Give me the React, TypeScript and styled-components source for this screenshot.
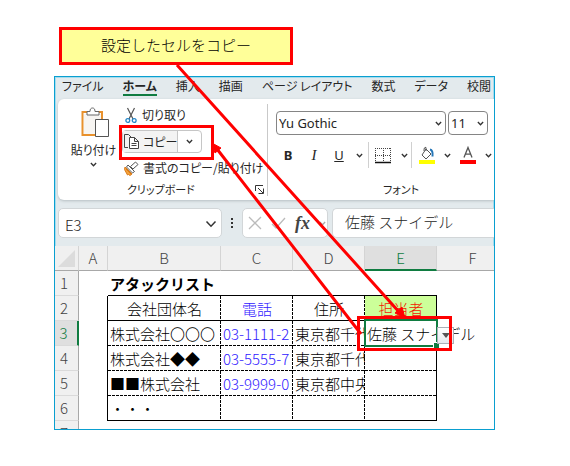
import React from "react";
import styled, { createGlobalStyle } from "styled-components";

const jp = `"Noto Sans CJK JP", "Noto Sans", sans-serif`;

const GlobalStyle = createGlobalStyle`
  * { box-sizing: border-box; }
  body { margin: 0; background: #fff; color: #262626; font-family: ${jp}; font-weight: 300; }
  button, input { font: inherit; color: inherit; }
  b { font-weight: 700; }
  svg { flex: none; }
`;

const Stage = styled.main`
  position: relative;
  padding: 27px 75px 36px 54px;
`;

const Callout = styled.div`
  display: flex;
  align-items: center;
  justify-content: center;
  width: 234px;
  height: 38px;
  margin: 0 0 11px 5px;
  border: 3px solid #f00;
  background: #ffff99;
  color: #000;
  font-size: 15px;
  line-height: 20px;
  padding-bottom: 3px;
`;

const AppWindow = styled.section`
  height: 354px;
  overflow: hidden;
  border: 1px solid #0a9fd0;
  box-shadow: inset 0 0 0 1px #a5dcee;
  background: #e3eaed;
`;

const Tabs = styled.nav`
  display: flex;
  gap: 19px;
  height: 22px;
  padding-left: 7px;
  font-size: 12px;
  font-feature-settings: "palt";
`;

const Tab = styled.button<{ $active?: boolean }>`
  flex: none;
  height: 19px;
  padding: 0;
  border: 0;
  border-bottom: 2px solid ${(p) => (p.$active ? "#107c41" : "transparent")};
  background: none;
  font-weight: ${(p) => (p.$active ? 700 : 400)};
  line-height: 17px;
  white-space: nowrap;
`;

const Ribbon = styled.div`
  display: flex;
  height: 101px;
  margin-left: 3px;
  padding-top: 5px;
  border-radius: 6px 0 0 6px;
  background: #fff;
  box-shadow: 0 1px 3px #b5bdc1;
  font-size: 12px;
  font-weight: 400;
  line-height: 18px;
  font-feature-settings: "palt";
`;

const Clipboard = styled.div`
  display: grid;
  flex: none;
  grid-template-columns: 64px 145px;
  grid-template-rows: 76px 18px;
  width: 210px;
  height: 92px;
  border-right: 1px solid #c9c9c9;
`;

const PasteButton = styled.button`
  display: flex;
  flex-direction: column;
  align-items: center;
  padding: 3px 0 0 7px;
  border: 0;
  background: none;
  gap: 2px;
  white-space: nowrap;
`;

const ClipList = styled.div`
  display: flex;
  flex-direction: column;
  gap: 4px;
`;

const ClipButton = styled.button`
  display: flex;
  align-items: center;
  gap: 4px;
  height: 22px;
  padding: 0 0 0 2px;
  border: 0;
  background: none;
  white-space: nowrap;
`;

const CopySplit = styled.div`
  display: flex;
  width: 80px;
  height: 23px;
  border: 1px solid #c6c6c6;
  border-radius: 4px;
`;

const CopyMain = styled.button`
  display: flex;
  align-items: center;
  gap: 3px;
  width: 56px;
  padding: 0;
  border: 0;
  border-right: 1px solid #c6c6c6;
  background: #f3f3f3;
  white-space: nowrap;
`;

const DropButton = styled.button`
  display: flex;
  align-items: center;
  justify-content: center;
  width: 23px;
  padding: 0;
  border: 0;
  background: none;
`;

const GroupFooter = styled.div`
  display: flex;
  grid-column: 1 / -1;
  align-items: center;
  justify-content: space-between;
  padding: 0 3px 0 69px;
  font-size: 11px;
`;

const LauncherButton = styled.button`
  display: flex;
  padding: 0;
  border: 0;
  background: none;
`;

const FontGroup = styled.div`
  display: flex;
  flex: 1;
  flex-direction: column;
  min-width: 0;
  padding: 7px 0 0 8px;
`;

const ComboRow = styled.div`
  display: flex;
  gap: 2px;
`;

const Combo = styled.label<{ $wide?: boolean }>`
  display: flex;
  flex: ${(p) => (p.$wide ? "1 1 0" : "0 0 40px")};
  align-items: center;
  height: 24px;
  min-width: 0;
  margin-right: ${(p) => (p.$wide ? 0 : 6)}px;
  padding: 0 3px 0 2px;
  border: 1px solid #858585;
  border-radius: 4px;
  font-family: "Noto Sans", sans-serif;
  font-size: 13px;
`;

const ComboInput = styled.input`
  flex: 1;
  width: 0;
  min-width: 0;
  padding: 0;
  border: 0;
  outline: 0;
  background: none;
`;

const FormatRow = styled.div`
  display: flex;
  align-items: center;
  height: 40px;
`;

const FormatButton = styled.button<{ $width: number }>`
  display: flex;
  flex: none;
  align-items: center;
  justify-content: center;
  width: ${(p) => p.$width}px;
  height: 24px;
  padding: 0;
  border: 0;
  background: none;
  font-family: "Noto Sans", sans-serif;
  font-size: 13px;
`;

const Italic = styled.i`
  font-family: "Liberation Serif", serif;
  font-size: 15px;
`;

const Rule = styled.span`
  flex: none;
  width: 1px;
  height: 26px;
  background: #d0d0d0;
`;

const FontLabel = styled.div`
  padding: 5px 0 0 107px;
  font-size: 11px;
`;

const FormulaBar = styled.div`
  display: flex;
  height: 46px;
  padding: 8px 0 8px 3px;
`;

const NameBox = styled.label`
  display: flex;
  flex: none;
  align-items: center;
  justify-content: space-between;
  width: 164px;
  padding: 2px 4px 0 6px;
  border: 1px solid #d2d6d8;
  border-radius: 5px;
  background: #fff;
`;

const NameInput = styled.input`
  width: 100px;
  padding: 0;
  border: 0;
  outline: 0;
  background: none;
  font-size: 15px;
`;

const Dots = styled.span`
  display: flex;
  flex: none;
  align-items: center;
  justify-content: center;
  width: 20px;
`;

const FormulaTools = styled.div`
  display: flex;
  flex: none;
  align-items: center;
  width: 86px;
  padding-left: 5px;
  gap: 9px;
  border: 1px solid #d2d6d8;
  border-radius: 5px;
  background: #fff;
`;

const ToolButton = styled.button`
  display: flex;
  padding: 0;
  border: 0;
  background: none;
  font: italic 700 18px/20px "Liberation Serif", serif;
  color: #444;
`;

const FormulaInput = styled.input`
  flex: 1;
  min-width: 0;
  margin-left: 4px;
  padding: 0 0 3px 12px;
  border: 1px solid #d2d6d8;
  border-right: 0;
  border-radius: 5px 0 0 5px;
  outline: 0;
  background: #fff;
  font-size: 15px;
`;

const Sheet = styled.table`
  width: 100%;
  min-width: 454px;
  table-layout: fixed;
  border-spacing: 0;
  background: #fff;
  font-size: 15px;
  line-height: 20px;
`;

const Col = styled.col<{ $width?: number }>`
  width: ${(p) => (p.$width ? `${p.$width}px` : "auto")};
`;

const ColHead = styled.th<{ $active?: boolean }>`
  height: 25px;
  padding: 0;
  border-right: 1px solid #d4d4d4;
  border-bottom: ${(p) => (p.$active ? "2px solid #107c41" : "1px solid #a8a8a8")};
  background: ${(p) => (p.$active ? "#dfdfdf" : "#f0f0f0")};
  color: ${(p) => (p.$active ? "#107c41" : "#444")};
  font-weight: 300;
`;

const Corner = styled(ColHead)`
  text-align: right;
  vertical-align: bottom;
  line-height: 0;
  padding: 0 3px 3px 0;
`;

const RowHead = styled.th<{ $active?: boolean }>`
  height: 25px;
  padding: 0 5px 0 0;
  border-right: ${(p) => (p.$active ? "2px solid #107c41" : "1px solid #a8a8a8")};
  border-bottom: 1px solid #dadada;
  background: ${(p) => (p.$active ? "#dfdfdf" : "#f0f0f0")};
  color: ${(p) => (p.$active ? "#107c41" : "#444")};
  font-weight: 300;
`;

type Line = "none" | "solid" | "dash";
const paint = (line: Line, angle: string) =>
  line === "none"
    ? "linear-gradient(transparent, transparent)"
    : line === "solid"
    ? "linear-gradient(#000, #000)"
    : `repeating-linear-gradient(${angle}, #000 0 3px, transparent 3px 4px)`;

const Cell = styled.td<{
  $right?: Line;
  $bottom?: Line;
  $center?: boolean;
  $color?: string;
  $fill?: string;
  $bold?: boolean;
  $spill?: boolean;
}>`
  height: 25px;
  padding: ${(p) => (p.$center ? "0" : "0 0 0 2px")};
  overflow: ${(p) => (p.$spill ? "visible" : "hidden")};
  white-space: nowrap;
  text-align: ${(p) => (p.$center ? "center" : "left")};
  color: ${(p) => p.$color ?? "#000"};
  font-weight: ${(p) => (p.$bold ? 700 : 300)};
  background-color: ${(p) => p.$fill ?? "transparent"};
  background-image: ${(p) => paint(p.$right ?? "none", "180deg")}, ${(p) => paint(p.$bottom ?? "none", "90deg")};
  background-repeat: no-repeat;
  background-position: right top, left bottom;
  background-size: 1px 100%, 100% 1px;
`;

const Selection = styled.div`
  position: absolute;
  left: 364px;
  top: 319px;
  width: 74px;
  height: 28px;
  border: 2px solid #107c41;
`;

const FillHandle = styled.span`
  position: absolute;
  right: -3px;
  bottom: -3px;
  width: 6px;
  height: 6px;
  background: #107c41;
  border-top: 1px solid #fff;
  border-left: 1px solid #fff;
`;

const CellDrop = styled.button`
  position: absolute;
  left: 437px;
  top: 327px;
  display: flex;
  align-items: center;
  justify-content: center;
  width: 17px;
  height: 17px;
  padding: 0;
  border: 1px solid #a9b0b8;
  background: linear-gradient(#fff, #e5e9ee);
`;

const Highlight = styled.div<{ $x: number; $y: number }>`
  position: absolute;
  left: ${(p) => p.$x}px;
  top: ${(p) => p.$y}px;
  width: 95px;
  height: 35px;
  border: 3px solid #f00;
  pointer-events: none;
`;

const Arrows = styled.svg`
  position: absolute;
  left: 0;
  top: 0;
  pointer-events: none;
`;

const Chevron = ({ size = 7, color = "#333" }: { size?: number; color?: string }) => (
  <svg width={size} height={size} viewBox="0 0 8 8" fill="none" stroke={color} strokeWidth={size > 8 ? 1 : 1.5}>
    <path d="M1 2.3 4 5.5 7 2.3" />
  </svg>
);

const PasteIcon = () => (
  <svg width="33" height="32" viewBox="-4 0 33 32" fill="none">
    <path d="M7 5H1.500v23H15M16 5h5v7" stroke="#e8912d" strokeWidth="2" />
    <path d="M3 7h17v5h-6v15H3z" fill="#f7f5f2" />
    <path d="M6 8V4.500h3C9 2 10 1 11.500 1S14 2 14 4.500h4V8z" fill="#fff" stroke="#666" />
    <path d="M14.500 12.500h13v17h-13z" fill="#fff" stroke="#555" />
  </svg>
);

const ScissorsIcon = () => (
  <svg width="14" height="17" viewBox="0 0 14 17" fill="none">
    <path d="m3.500 1 5.500 11M10.500 1 5 12" stroke="#555" strokeWidth="1.200" />
    <circle cx="3.800" cy="13.500" r="1.900" stroke="#2487c9" strokeWidth="1.300" />
    <circle cx="10.200" cy="13.500" r="1.900" stroke="#2487c9" strokeWidth="1.300" />
  </svg>
);

const CopyIcon = () => (
  <svg width="17" height="17" viewBox="0 0 17 17" fill="none" stroke="#444">
    <path d="M5 14.500H1.500v-13h4L8 4" />
    <path d="M6.500 4.500h5l4 4v7h-9zM11.500 4.500v4h4M8.500 10.500h5M8.500 12.500h5" fill="#fff" />
  </svg>
);

const BrushIcon = () => (
  <svg width="15" height="15" viewBox="0 0 15 15" fill="none">
    <path d="m1 6 7 7-2 1.500-1.500-1-1 .5L.500 8.500z" fill="#f5a33b" stroke="#d97a19" />
    <path d="m4 4 6.500 6.500L8.500 12 2.500 6z" fill="#fff" stroke="#555" />
    <path d="m6.500 5.500 5-4.500 2.500 2.500-5 4.500z" fill="#fff" stroke="#555" />
    <path d="m2 8 5 5" stroke="#d97a19" />
  </svg>
);

const LauncherIcon = () => (
  <svg width="9" height="9" viewBox="0 0 9 9" fill="none" stroke="#333">
    <path d="M.500 6V.500H8M3 3l5 5M8.500 3.500v5h-5" />
  </svg>
);

const BordersIcon = () => (
  <svg width="16" height="17" viewBox="0 0 16 17" fill="none" stroke="#444">
    <path d="M.500 1v13M8.500 1v13M15.500 1v13M0 1.500h16M0 8.500h16" strokeDasharray="1 1" />
    <path d="M0 15.500h16" stroke="#111" strokeWidth="1.500" />
  </svg>
);

const FillIcon = () => (
  <svg width="16" height="18" viewBox="0 0 16 18" fill="none">
    <path d="m7 3 5 5-5 5-4-4zM7 5V1.500c-1.500-.5-2 .5-2 3.500" stroke="#555" fill="#fff" />
    <path d="M11 3.500c2.500.5 3 2.500 2.500 7" stroke="#2476b8" strokeWidth="2" />
    <path d="M0 14h16v4H0z" fill="#ff0" />
  </svg>
);

const FontColorIcon = () => (
  <svg width="16" height="18" viewBox="0 0 16 18" fill="none">
    <path d="m4 11.500 4-10 4 10M5.300 8.200h5.400" stroke="#555" strokeWidth="1.300" />
    <path d="M0 14h16v4H0z" fill="red" />
  </svg>
);

const tabs = ["ファイル", "ホーム", "挿入", "描画", "ページ レイアウト", "数式", "データ", "校閲"];
const columns = ["A", "B", "C", "D", "E", "F"];
const blue = "#3020ff";
const rows = [
  { n: 3, cells: ["株式会社〇〇〇", "03-1111-2", "東京都千代", "佐藤 スナイデル"] },
  { n: 4, cells: ["株式会社◆◆", "03-5555-7", "東京都千代", ""] },
  { n: 5, cells: ["■■株式会社", "03-9999-0", "東京都中央", ""] },
  { n: 6, cells: ["・・・", "", "", ""] },
];

export default function App() {
  return (
    <>
      <GlobalStyle />
      <Stage>
        <Callout>設定したセルをコピー</Callout>
        <AppWindow>
          <Tabs>
            {tabs.map((t, i) => (
              <Tab key={t} $active={i === 1}>{t}</Tab>
            ))}
          </Tabs>
          <Ribbon>
            <Clipboard>
              <PasteButton>
                <PasteIcon />
                貼り付け
                <Chevron />
              </PasteButton>
              <ClipList>
                <ClipButton><ScissorsIcon />切り取り</ClipButton>
                <CopySplit>
                  <CopyMain><CopyIcon />コピー</CopyMain>
                  <DropButton aria-label="コピーのオプション"><Chevron /></DropButton>
                </CopySplit>
                <ClipButton><BrushIcon />書式のコピー/貼り付け</ClipButton>
              </ClipList>
              <GroupFooter>
                クリップボード
                <LauncherButton aria-label="クリップボードの設定"><LauncherIcon /></LauncherButton>
              </GroupFooter>
            </Clipboard>
            <FontGroup>
              <ComboRow>
                <Combo $wide>
                  <ComboInput aria-label="フォント名" defaultValue="Yu Gothic" />
                  <Chevron />
                </Combo>
                <Combo>
                  <ComboInput aria-label="フォント サイズ" defaultValue="11" />
                  <Chevron />
                </Combo>
              </ComboRow>
              <FormatRow>
                <FormatButton $width={24}><b>B</b></FormatButton>
                <FormatButton $width={28}><Italic>I</Italic></FormatButton>
                <FormatButton $width={22}><u>U</u></FormatButton>
                <FormatButton $width={18} aria-label="下線の種類"><Chevron /></FormatButton>
                <Rule />
                <FormatButton $width={28} aria-label="罫線"><BordersIcon /></FormatButton>
                <FormatButton $width={14} aria-label="罫線の種類"><Chevron /></FormatButton>
                <Rule />
                <FormatButton $width={30} aria-label="塗りつぶしの色"><FillIcon /></FormatButton>
                <FormatButton $width={10} aria-label="塗りつぶしの一覧"><Chevron /></FormatButton>
                <FormatButton $width={32} aria-label="フォントの色"><FontColorIcon /></FormatButton>
                <FormatButton $width={8} aria-label="フォントの色の一覧"><Chevron /></FormatButton>
              </FormatRow>
              <FontLabel>フォント</FontLabel>
            </FontGroup>
          </Ribbon>
          <FormulaBar>
            <NameBox>
              <NameInput aria-label="名前ボックス" defaultValue="E3" />
              <Chevron size={12} />
            </NameBox>
            <Dots>
              <svg width="3" height="11" viewBox="0 0 3 11" fill="#333">
                <path d="M0 0h2v2H0zM0 4h2v2H0zM0 8h2v2H0z" />
              </svg>
            </Dots>
            <FormulaTools>
              <ToolButton aria-label="キャンセル">
                <svg width="14" height="14" viewBox="0 0 14 14" fill="none" stroke="#bbb" strokeWidth="1.300"><path d="m1 1 12 12M13 1 1 13" /></svg>
              </ToolButton>
              <ToolButton aria-label="入力">
                <svg width="15" height="14" viewBox="0 0 15 14" fill="none" stroke="#bbb" strokeWidth="1.300"><path d="m1 8 4 4L14 2" /></svg>
              </ToolButton>
              <ToolButton>fx</ToolButton>
              <Chevron color="#aaa" />
            </FormulaTools>
            <FormulaInput aria-label="数式バー" defaultValue="佐藤 スナイデル" />
          </FormulaBar>
          <Sheet>
            <colgroup>
              <Col $width={24} /><Col $width={29} /><Col $width={113} /><Col $width={72} />
              <Col $width={72} /><Col $width={72} /><Col />
            </colgroup>
            <thead>
              <tr>
                <Corner>
                  <svg width="17" height="17" viewBox="0 0 17 17"><path d="M17 0v17H0z" fill="#dcdcdc" /></svg>
                </Corner>
                {columns.map((c) => <ColHead key={c} $active={c === "E"}>{c}</ColHead>)}
              </tr>
            </thead>
            <tbody>
              <tr>
                <RowHead>1</RowHead>
                <Cell />
                <Cell $bold $bottom="solid">アタックリスト</Cell>
                <Cell $bottom="solid" /><Cell $bottom="solid" /><Cell $bottom="solid" /><Cell />
              </tr>
              <tr>
                <RowHead>2</RowHead>
                <Cell $right="solid" />
                <Cell $center $right="dash" $bottom="solid">会社団体名</Cell>
                <Cell $center $right="dash" $bottom="solid" $color={blue}>電話</Cell>
                <Cell $center $right="dash" $bottom="solid">住所</Cell>
                <Cell $center $right="solid" $bottom="solid" $color="#f01800" $fill="#ccff99">担当者</Cell>
                <Cell />
              </tr>
              {rows.map(({ n, cells }) => {
                const bottom: Line = n === 6 ? "solid" : "dash";
                return (
                  <tr key={n}>
                    <RowHead $active={n === 3}>{n}</RowHead>
                    <Cell $right="solid" />
                    {cells.map((text, i) => (
                      <Cell key={i} $right={i === 3 ? "solid" : "dash"} $bottom={bottom} $color={i === 1 ? blue : undefined} $spill={i === 3}>
                        {text}
                      </Cell>
                    ))}
                    <Cell />
                  </tr>
                );
              })}
              <tr>
                <RowHead>7</RowHead>
                <Cell /><Cell /><Cell /><Cell /><Cell /><Cell />
              </tr>
            </tbody>
          </Sheet>
        </AppWindow>
        <Selection><FillHandle /></Selection>
        <CellDrop aria-label="担当者を選択">
          <svg width="8" height="5" viewBox="0 0 8 5"><path d="M0 0h8L4 5z" fill="#555" /></svg>
        </CellDrop>
        <Highlight $x={119} $y={125} />
        <Highlight $x={357} $y={316} />
        <Arrows width="570" height="466" viewBox="0 0 570 466" fill="red" stroke="red">
          <path d="M177 65 400 313M361 334 217 149" strokeWidth="3" />
          <path d="m405 318-10-5 7-6zM212 143l9 5-6 5z" strokeWidth="1" />
        </Arrows>
      </Stage>
    </>
  );
}
